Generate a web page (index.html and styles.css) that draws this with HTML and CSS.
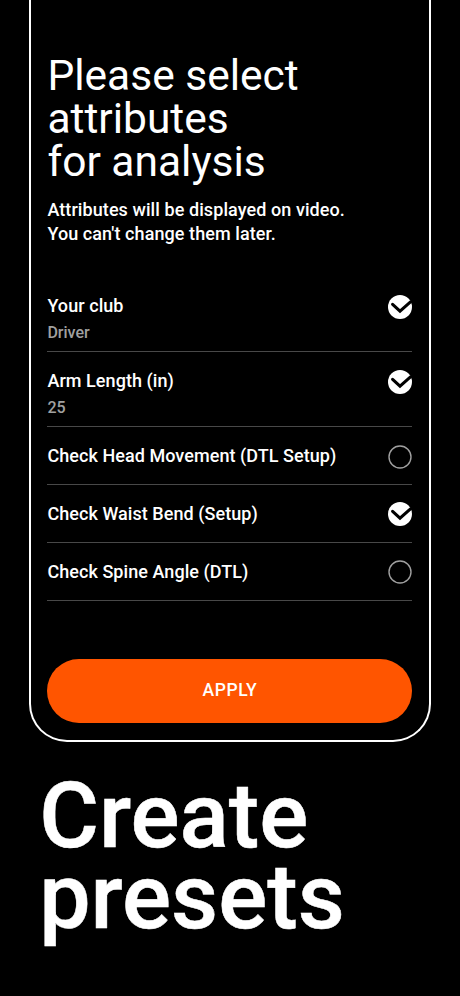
FILE: index.html
```html
<!DOCTYPE html>
<html lang="en">
<head>
<meta charset="utf-8">
<title>Create presets</title>
<link rel="stylesheet" href="styles.css">
</head>
<body>
<main class="phone">
  <h1 class="title">Please select<br>attributes<br>for analysis</h1>
  <p class="intro">Attributes will be displayed on video.<br>You can't change them later.</p>
  <ul class="list">
    <li class="row tall"><div><div class="label">Your club</div><div class="value">Driver</div></div><svg class="check" viewBox="0 0 24 24"><circle cx="12" cy="12" r="12" fill="#fff"/><path d="M4.6 9.3 12 16.2 22.5 6.8" fill="none" stroke="#000" stroke-width="3" stroke-linecap="round"/></svg></li>
    <li class="row tall"><div><div class="label">Arm Length (in)</div><div class="value">25</div></div><svg class="check" viewBox="0 0 24 24"><circle cx="12" cy="12" r="12" fill="#fff"/><path d="M4.6 9.3 12 16.2 22.5 6.8" fill="none" stroke="#000" stroke-width="3" stroke-linecap="round"/></svg></li>
    <li class="row"><div class="label">Check Head Movement (DTL Setup)</div><svg class="check" viewBox="0 0 24 24"><circle cx="12" cy="12" r="11" fill="none" stroke="#a0a0a0" stroke-width="1.4"/></svg></li>
    <li class="row"><div class="label">Check Waist Bend (Setup)</div><svg class="check" viewBox="0 0 24 24"><circle cx="12" cy="12" r="12" fill="#fff"/><path d="M4.6 9.3 12 16.2 22.5 6.8" fill="none" stroke="#000" stroke-width="3" stroke-linecap="round"/></svg></li>
    <li class="row"><div class="label">Check Spine Angle (DTL)</div><svg class="check" viewBox="0 0 24 24"><circle cx="12" cy="12" r="11" fill="none" stroke="#a0a0a0" stroke-width="1.4"/></svg></li>
  </ul>
  <button class="apply">APPLY</button>
</main>
<h2 class="headline">Create<br>presets</h2>
</body>
</html>
```
FILE: styles.css
```css
* { box-sizing: border-box; margin: 0; padding: 0; }
body { background: #000; color: #fff; font-family: Roboto, sans-serif; height: 996px; overflow: hidden; }
.phone { width: 402px; height: 742px; margin-left: 29px; padding: 54px 16.4px 0; border: 2px solid #fff; border-top: 0; border-radius: 0 0 38px 38px; }
.title { font-size: 42.5px; line-height: 43px; font-weight: 400; white-space: nowrap; }
.intro { margin-top: 15.4px; font-size: 18px; letter-spacing: .08px; line-height: 23.7px; font-weight: 500; white-space: nowrap; }
.list { list-style: none; margin-top: 31.6px; width: 365px; }
.row { display: flex; justify-content: space-between; height: 57.8px; padding-top: 16.6px; border-bottom: 1px solid #484848; }
.tall { height: 75px; }
.label { font-size: 18px; letter-spacing: .06px; line-height: 24px; font-weight: 500; white-space: nowrap; }
.value { font-size: 16px; line-height: 20px; margin-top: 5px; font-weight: 500; color: #a0a0a0; }
.check { width: 24px; height: 24px; margin-top: .6px; }
.apply { display: block; width: 365px; height: 64px; margin-top: 58.5px; padding-bottom: 2px; border: 0; border-radius: 32px; background: #ff5500; color: #fff; font: 500 17.5px Roboto, sans-serif; letter-spacing: .6px; }
.headline { margin: 33px 0 0 39.2px; font-size: 91.5px; line-height: 81.2px; font-weight: 500; -webkit-text-stroke: .5px #fff; }
```
